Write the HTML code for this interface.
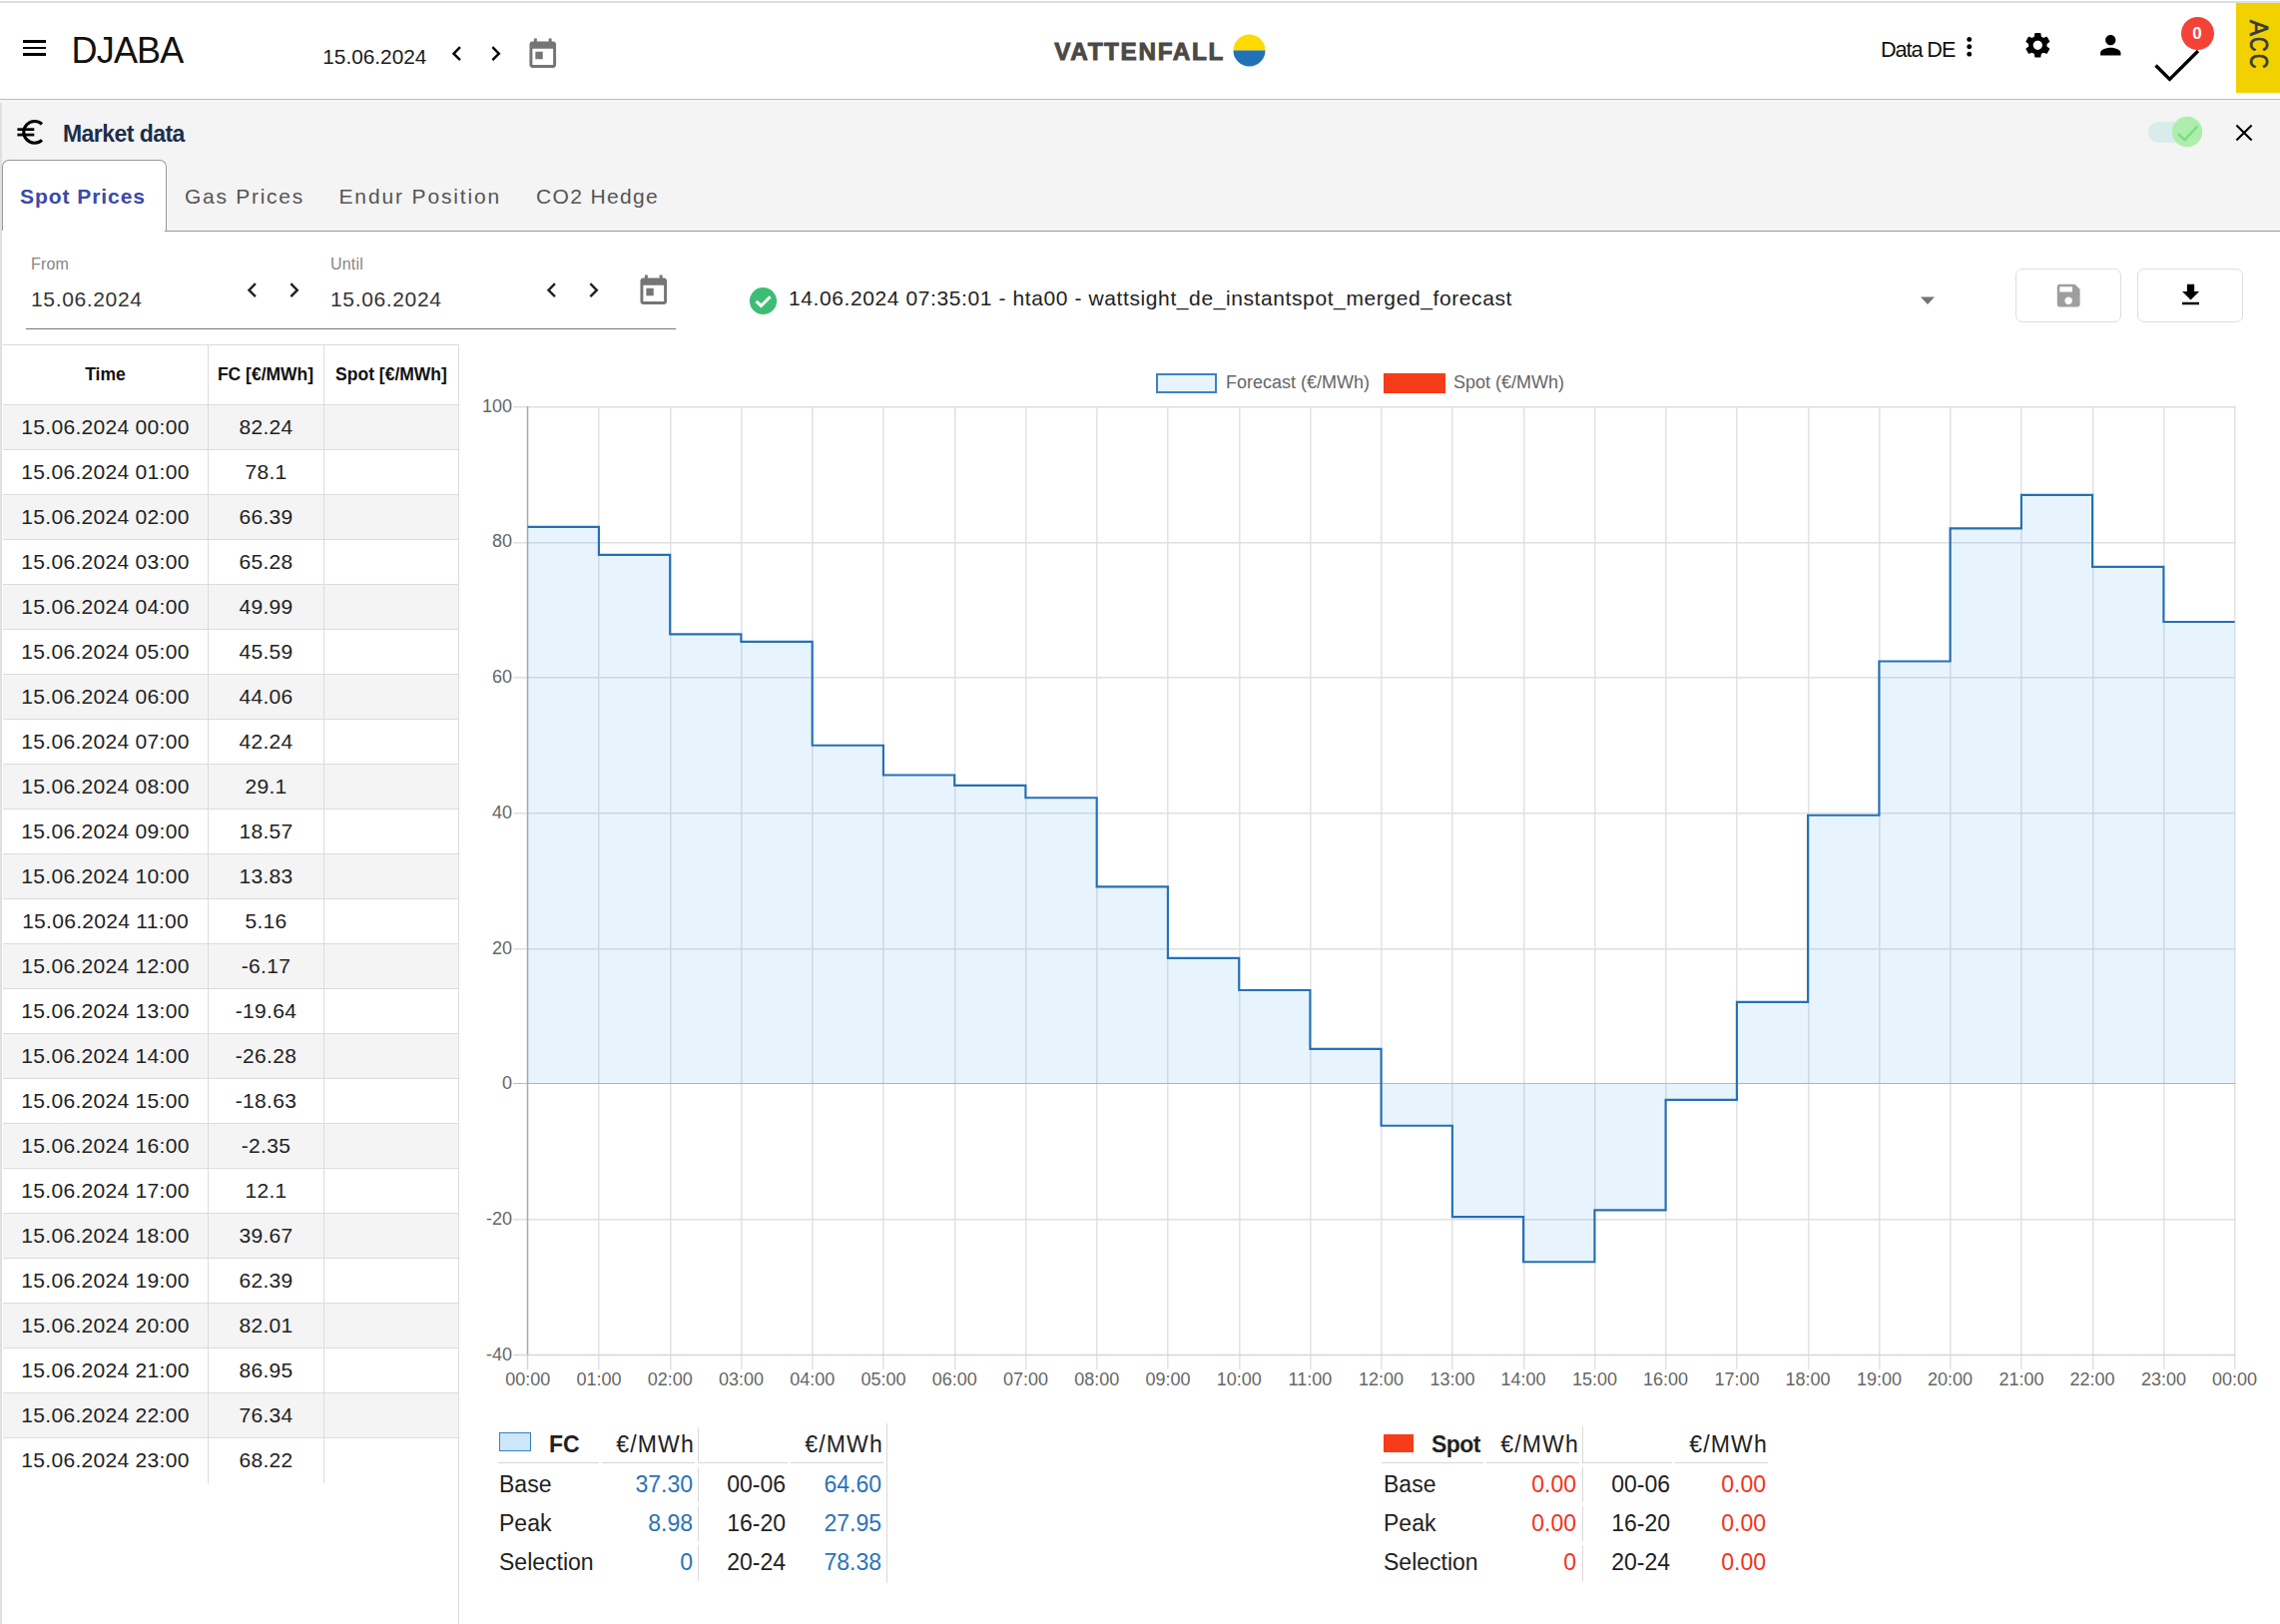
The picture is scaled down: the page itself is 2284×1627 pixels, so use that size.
<!DOCTYPE html>
<html><head><meta charset="utf-8"><title>DJABA</title><style>
html,body{margin:0;padding:0;}
body{width:2284px;height:1627px;position:relative;overflow:hidden;background:#fff;font-family:"Liberation Sans",sans-serif;color:#212121;}
.a{position:absolute;white-space:nowrap;}
/* header */
.topline{position:absolute;left:0;top:1px;width:2284px;height:2px;background:#dcdfdc;}
.hdr-b{position:absolute;left:0;top:99px;width:2284px;height:1px;background:#bdbdbd;}
.ham{position:absolute;left:23.4px;width:23.1px;height:2.4px;background:#000;}
.logo{font-size:36px;left:71.5px;top:30px;color:#111;letter-spacing:-0.8px;}
.hdate{font-size:20.8px;left:323.3px;top:45.3px;letter-spacing:0px;color:#1a1a1a;}
.vf{font-family:"Liberation Sans",sans-serif;font-weight:bold;font-size:24.3px;color:#4c4845;left:1056.2px;top:37.6px;letter-spacing:1.65px;-webkit-text-stroke:0.9px #4c4845;}
.datade{font-size:21.6px;left:1884px;top:37.1px;color:#111;letter-spacing:-1.05px;}
.acc{position:absolute;left:2240px;top:3px;width:44px;height:90px;background:#f2d100;}
.acc span{position:absolute;left:8px;top:66px;transform:rotate(90deg);transform-origin:0 0;}
/* panel */
.panel{position:absolute;left:0;top:100px;width:2284px;height:131px;background:#f4f4f4;}
.pleft{position:absolute;left:0;top:103px;width:2px;height:1524px;background:#e0e0e0;}
.mdata{font-size:23px;font-weight:bold;left:63px;top:120.5px;color:#1c2e4a;letter-spacing:-0.55px;}
.tab{font-size:21px;top:184.5px;color:#555;}
.tabact{position:absolute;left:2px;top:160px;width:165.2px;height:72px;background:#fff;border:1.3px solid #999;border-bottom:none;border-radius:7px 7px 0 0;box-sizing:border-box;height:71px;}
.tabline{position:absolute;left:165px;top:230.7px;width:2119px;height:1.3px;background:#999;}
/* filters */
.lbl{font-size:16px;color:#858585;top:256px;letter-spacing:0.2px;}
.fdate{font-size:21px;color:#333;top:287.7px;letter-spacing:0.65px;}
.uline{position:absolute;left:26px;top:329px;width:651px;height:1px;background:#777;}
.status{font-size:21px;color:#222;left:790px;top:287px;letter-spacing:0.6px;}
.btn{position:absolute;top:269px;width:106.5px;height:53.5px;border:1px solid #dedede;border-radius:7px;background:#fff;box-sizing:border-box;}
/* table */
.tbl{position:absolute;left:3px;top:345px;width:456px;}
.th{position:absolute;top:345px;height:60px;font-weight:bold;font-size:17.5px;color:#111;}
.tr{position:absolute;left:3px;width:457px;height:45px;border-top:1px solid #dcdcdc;box-sizing:border-box;}
.tr.odd{background:#f4f4f4;}
.tr div{position:absolute;top:0;height:44px;line-height:44px;font-size:21px;color:#222;text-align:center;letter-spacing:0.3px;}
.c1{left:0;width:205px;}
.c2{left:206px;width:115px;}
.c3{left:322px;width:135px;}
.vl{position:absolute;width:1px;background:#dcdcdc;}
/* chart */
.chart{position:absolute;left:0;top:0;}
.tk{font-family:"Liberation Sans",sans-serif;font-size:18px;fill:#666;}
.leg{font-size:18px;color:#666;top:372.7px;}
/* summary */
.sum{font-size:23px;color:#222;}
.blue{color:#2a73b9;}
.red{color:#f5331a;}
.hl{position:absolute;height:1.5px;background:#d6d6d6;}
.sv{position:absolute;width:1.5px;background:#dadada;}

</style></head><body>
<div class="topline"></div>
<div class="ham" style="top:40.1px;height:2.8px"></div>
<div class="ham" style="top:46.8px;height:2.3px"></div>
<div class="ham" style="top:53px;height:2.7px"></div>
<div class="a logo" id="logo">DJABA</div>
<div class="a hdate" id="hdate">15.06.2024</div>
<svg class="a" style="left:443.3px;top:39.2px" width="29.3" height="29.3" viewBox="0 0 24 24"><path d="M15.41 7.41L14 6l-6 6 6 6 1.41-1.41L10.83 12z" fill="#000"/></svg>
<svg class="a" style="left:482.2px;top:39.2px" width="29.3" height="29.3" viewBox="0 0 24 24"><path d="M10 6L8.59 7.41 13.17 12l-4.58 4.59L10 18l6-6z" fill="#000"/></svg>
<svg class="a" style="left:526.2px;top:36.8px" width="35.5" height="35.5" viewBox="0 0 24 24"><path d="M19 3h-1V1h-2v2H8V1H6v2H5c-1.11 0-1.99.9-1.99 2L3 19c0 1.1.89 2 2 2h14c1.1 0 2-.9 2-2V5c0-1.1-.9-2-2-2zm0 16H5V8h14v11zM7 10h5v5H7z" fill="#757575"/></svg>
<div class="a vf" id="vf">VATTENFALL</div>
<svg class="a" style="left:1235px;top:34px" width="33" height="33" viewBox="0 0 33 33"><path d="M0.5,16.5 A16,16 0 0 1 32.5,16.5 Z" fill="#ffda00"/><path d="M0.5,16.5 A16,16 0 0 0 32.5,16.5 Z" fill="#2071b5"/></svg>
<div class="a datade" id="datade">Data DE</div>
<svg class="a" style="left:1958.1px;top:32.2px" width="29.5" height="29.5" viewBox="0 0 24 24"><path d="M12 8c1.1 0 2-.9 2-2s-.9-2-2-2-2 .9-2 2 .9 2 2 2zm0 2c-1.1 0-2 .9-2 2s.9 2 2 2 2-.9 2-2-.9-2-2-2zm0 6c-1.1 0-2 .9-2 2s.9 2 2 2 2-.9 2-2-.9-2-2-2z" fill="#000"/></svg>
<svg class="a" style="left:2026.4px;top:29.6px" width="30.7" height="30.7" viewBox="0 0 24 24"><path d="M19.14 12.94c.04-.3.06-.61.06-.94 0-.32-.02-.64-.07-.94l2.03-1.58c.18-.14.23-.41.12-.61l-1.92-3.32c-.12-.22-.37-.29-.59-.22l-2.39.96c-.5-.38-1.03-.7-1.62-.94l-.36-2.54c-.04-.24-.24-.41-.48-.41h-3.84c-.24 0-.43.17-.47.41l-.36 2.54c-.59.24-1.13.57-1.62.94l-2.39-.96c-.22-.08-.47 0-.59.22L2.74 8.87c-.12.21-.08.47.12.61l2.03 1.58c-.05.3-.09.63-.09.94s.02.64.07.94l-2.03 1.58c-.18.14-.23.41-.12.61l1.92 3.32c.12.22.37.29.59.22l2.39-.96c.5.38 1.03.7 1.62.94l.36 2.54c.05.24.24.41.48.41h3.84c.24 0 .44-.17.47-.41l.36-2.54c.59-.24 1.13-.56 1.62-.94l2.39.96c.22.08.47 0 .59-.22l1.92-3.32c.12-.22.07-.47-.12-.61l-2.01-1.58zM12 15.6c-1.98 0-3.6-1.62-3.6-3.6s1.62-3.6 3.6-3.6 3.6 1.62 3.6 3.6-1.62 3.6-3.6 3.6z" fill="#000"/></svg>
<svg class="a" style="left:2098.8px;top:29.6px" width="30.6" height="30.6" viewBox="0 0 24 24"><path d="M12 12c2.21 0 4-1.79 4-4s-1.79-4-4-4-4 1.79-4 4 1.79 4 4 4zm0 2c-2.67 0-8 1.34-8 4v2h16v-2c0-2.66-5.33-4-8-4z" fill="#000"/></svg>
<svg class="a" style="left:2150px;top:40px" width="60" height="45" viewBox="0 0 60 45"><path d="M9.5,25.5 L23.5,39.5 L52,11" fill="none" stroke="#000" stroke-width="3.3"/></svg>
<div class="a" style="left:2184.5px;top:16.5px;width:33px;height:33px;border-radius:50%;background:#f44336;"></div>
<div class="a" id="badge" style="left:2184.5px;top:16.5px;width:33px;height:33px;line-height:33px;text-align:center;color:#fff;font-weight:bold;font-size:17px;">0</div>
<div class="acc"></div><div class="a" style="left:2277.6px;top:20.0px;font-size:26px;line-height:30px;color:#3a3a3a;-webkit-text-stroke:0.7px #3a3a3a;transform:rotate(90deg) scale(0.92,1);transform-origin:0 0;">A</div><div class="a" style="left:2277.6px;top:37.3px;font-size:26px;line-height:30px;color:#3a3a3a;-webkit-text-stroke:0.7px #3a3a3a;transform:rotate(90deg) scale(0.78,1);transform-origin:0 0;">C</div><div class="a" style="left:2277.6px;top:54.2px;font-size:26px;line-height:30px;color:#3a3a3a;-webkit-text-stroke:0.7px #3a3a3a;transform:rotate(90deg) scale(0.78,1);transform-origin:0 0;">C</div>
<div class="hdr-b"></div>

<div class="panel"></div>
<svg class="a" style="left:0px;top:100px" width="60" height="60" viewBox="0 100 60 60"><path d="M42,124.4 A10.85,10.85 0 1 0 42,140.3" fill="none" stroke="#000" stroke-width="3.1"/><rect x="17.4" y="128.3" width="16.9" height="2.7" fill="#000"/><rect x="17.4" y="133.7" width="16.9" height="2.7" fill="#000"/></svg>
<div class="a mdata" id="mdata">Market data</div>
<svg class="a" style="left:2140px;top:110px" width="70" height="44" viewBox="0 0 70 44"><rect x="12" y="12" width="41" height="21" rx="10.5" fill="#d9ecec"/><circle cx="51" cy="22" r="15.2" fill="#aeeeac"/><path d="M42,24 L48.4,30.1 L61.3,16.6" fill="none" stroke="#7ddf80" stroke-width="2.6"/></svg>
<svg class="a" style="left:2236px;top:121px" width="24" height="24" viewBox="0 0 24 24"><path d="M4.4,4.4 L19.6,19.6 M19.6,4.4 L4.4,19.6" stroke="#000" stroke-width="2.1" fill="none"/></svg>
<div class="tabline"></div>
<div class="tabact"></div>
<div class="a tab" id="tab1" style="left:20px;color:#3949ab;font-weight:bold;letter-spacing:0.95px;">Spot Prices</div>
<div class="a tab" id="tab2" style="left:185px;letter-spacing:1.72px;">Gas Prices</div>
<div class="a tab" id="tab3" style="left:339.5px;letter-spacing:1.86px;">Endur Position</div>
<div class="a tab" id="tab4" style="left:537px;letter-spacing:1.35px;">CO2 Hedge</div>
<div class="pleft"></div>

<div class="a lbl" id="lblfrom" style="left:31px;">From</div>
<div class="a fdate" id="fd1" style="left:31px;">15.06.2024</div>
<svg class="a" style="left:238px;top:276.3px" width="29.3" height="29.3" viewBox="0 0 24 24"><path d="M15.41 7.41L14 6l-6 6 6 6 1.41-1.41L10.83 12z" fill="#222"/></svg>
<svg class="a" style="left:280px;top:276.3px" width="29.3" height="29.3" viewBox="0 0 24 24"><path d="M10 6L8.59 7.41 13.17 12l-4.58 4.59L10 18l6-6z" fill="#222"/></svg>
<div class="a lbl" id="lbluntil" style="left:331px;">Until</div>
<div class="a fdate" id="fd2" style="left:331px;">15.06.2024</div>
<svg class="a" style="left:538px;top:276.3px" width="29.3" height="29.3" viewBox="0 0 24 24"><path d="M15.41 7.41L14 6l-6 6 6 6 1.41-1.41L10.83 12z" fill="#222"/></svg>
<svg class="a" style="left:580px;top:276.3px" width="29.3" height="29.3" viewBox="0 0 24 24"><path d="M10 6L8.59 7.41 13.17 12l-4.58 4.59L10 18l6-6z" fill="#222"/></svg>
<svg class="a" style="left:636.5px;top:273.5px" width="35.5" height="35.5" viewBox="0 0 24 24"><path d="M19 3h-1V1h-2v2H8V1H6v2H5c-1.11 0-1.99.9-1.99 2L3 19c0 1.1.89 2 2 2h14c1.1 0 2-.9 2-2V5c0-1.1-.9-2-2-2zm0 16H5V8h14v11zM7 10h5v5H7z" fill="#757575"/></svg>
<div class="uline"></div>

<svg class="a" style="left:749px;top:286px" width="31" height="31" viewBox="0 0 31 31"><circle cx="15.5" cy="15.5" r="13.6" fill="#3dbd73"/><path d="M8.6,15.8 L13.4,20.4 L22.6,11.2" fill="none" stroke="#fff" stroke-width="3"/></svg>
<div class="a status" id="status">14.06.2024 07:35:01 - hta00 - wattsight_de_instantspot_merged_forecast</div>
<svg class="a" style="left:1921px;top:294px" width="20" height="14" viewBox="0 0 20 14"><path d="M2.9,3.5 L17,3.5 L10,11 Z" fill="#757575"/></svg>
<div class="btn" style="left:2018.7px;"></div>
<svg class="a" style="left:2057.2px;top:281px" width="30.4" height="30.4" viewBox="0 0 24 24"><path d="M17 3H5c-1.11 0-2 .9-2 2v14c0 1.1.89 2 2 2h14c1.1 0 2-.9 2-2V7l-4-4zm-5 16c-1.66 0-3-1.34-3-3s1.34-3 3-3 3 1.34 3 3-1.34 3-3 3zm3-10H5V5h10v4z" fill="#9e9e9e"/></svg>
<div class="btn" style="left:2140.7px;"></div>
<svg class="a" style="left:2179.9px;top:281.2px" width="29.1" height="29.1" viewBox="0 0 24 24"><path d="M19 9h-4V3H9v6H5l7 7 7-7zM5 18v2h14v-2H5z" fill="#000"/></svg>

<!-- table -->
<div class="a" style="left:3px;top:345px;width:457px;height:1px;background:#dcdcdc;"></div>
<div class="a th" id="th1" style="left:3px;width:205px;line-height:60px;text-align:center;">Time</div>
<div class="a th" id="th2" style="left:208px;width:116px;line-height:60px;text-align:center;">FC [€/MWh]</div>
<div class="a th" id="th3" style="left:325px;width:134px;line-height:60px;text-align:center;">Spot [€/MWh]</div>
<div class="tr odd" style="top:405px"><div class="c1">15.06.2024 00:00</div><div class="c2">82.24</div><div class="c3"></div></div>
<div class="tr" style="top:450px"><div class="c1">15.06.2024 01:00</div><div class="c2">78.1</div><div class="c3"></div></div>
<div class="tr odd" style="top:495px"><div class="c1">15.06.2024 02:00</div><div class="c2">66.39</div><div class="c3"></div></div>
<div class="tr" style="top:540px"><div class="c1">15.06.2024 03:00</div><div class="c2">65.28</div><div class="c3"></div></div>
<div class="tr odd" style="top:585px"><div class="c1">15.06.2024 04:00</div><div class="c2">49.99</div><div class="c3"></div></div>
<div class="tr" style="top:630px"><div class="c1">15.06.2024 05:00</div><div class="c2">45.59</div><div class="c3"></div></div>
<div class="tr odd" style="top:675px"><div class="c1">15.06.2024 06:00</div><div class="c2">44.06</div><div class="c3"></div></div>
<div class="tr" style="top:720px"><div class="c1">15.06.2024 07:00</div><div class="c2">42.24</div><div class="c3"></div></div>
<div class="tr odd" style="top:765px"><div class="c1">15.06.2024 08:00</div><div class="c2">29.1</div><div class="c3"></div></div>
<div class="tr" style="top:810px"><div class="c1">15.06.2024 09:00</div><div class="c2">18.57</div><div class="c3"></div></div>
<div class="tr odd" style="top:855px"><div class="c1">15.06.2024 10:00</div><div class="c2">13.83</div><div class="c3"></div></div>
<div class="tr" style="top:900px"><div class="c1">15.06.2024 11:00</div><div class="c2">5.16</div><div class="c3"></div></div>
<div class="tr odd" style="top:945px"><div class="c1">15.06.2024 12:00</div><div class="c2">-6.17</div><div class="c3"></div></div>
<div class="tr" style="top:990px"><div class="c1">15.06.2024 13:00</div><div class="c2">-19.64</div><div class="c3"></div></div>
<div class="tr odd" style="top:1035px"><div class="c1">15.06.2024 14:00</div><div class="c2">-26.28</div><div class="c3"></div></div>
<div class="tr" style="top:1080px"><div class="c1">15.06.2024 15:00</div><div class="c2">-18.63</div><div class="c3"></div></div>
<div class="tr odd" style="top:1125px"><div class="c1">15.06.2024 16:00</div><div class="c2">-2.35</div><div class="c3"></div></div>
<div class="tr" style="top:1170px"><div class="c1">15.06.2024 17:00</div><div class="c2">12.1</div><div class="c3"></div></div>
<div class="tr odd" style="top:1215px"><div class="c1">15.06.2024 18:00</div><div class="c2">39.67</div><div class="c3"></div></div>
<div class="tr" style="top:1260px"><div class="c1">15.06.2024 19:00</div><div class="c2">62.39</div><div class="c3"></div></div>
<div class="tr odd" style="top:1305px"><div class="c1">15.06.2024 20:00</div><div class="c2">82.01</div><div class="c3"></div></div>
<div class="tr" style="top:1350px"><div class="c1">15.06.2024 21:00</div><div class="c2">86.95</div><div class="c3"></div></div>
<div class="tr odd" style="top:1395px"><div class="c1">15.06.2024 22:00</div><div class="c2">76.34</div><div class="c3"></div></div>
<div class="tr" style="top:1440px"><div class="c1">15.06.2024 23:00</div><div class="c2">68.22</div><div class="c3"></div></div>
<div class="vl" style="left:208px;top:345px;height:1141px;"></div>
<div class="vl" style="left:324px;top:345px;height:1141px;"></div>
<div class="vl" style="left:459px;top:345px;height:1282px;"></div>

<svg class="chart" width="2284" height="1627" viewBox="0 0 2284 1627">
<line x1="599.80" y1="407.5" x2="599.80" y2="1372.0" stroke="#e0e0e0" stroke-width="1.4"/>
<line x1="671.80" y1="407.5" x2="671.80" y2="1372.0" stroke="#e0e0e0" stroke-width="1.4"/>
<line x1="742.80" y1="407.5" x2="742.80" y2="1372.0" stroke="#e0e0e0" stroke-width="1.4"/>
<line x1="813.80" y1="407.5" x2="813.80" y2="1372.0" stroke="#e0e0e0" stroke-width="1.4"/>
<line x1="884.80" y1="407.5" x2="884.80" y2="1372.0" stroke="#e0e0e0" stroke-width="1.4"/>
<line x1="956.80" y1="407.5" x2="956.80" y2="1372.0" stroke="#e0e0e0" stroke-width="1.4"/>
<line x1="1027.80" y1="407.5" x2="1027.80" y2="1372.0" stroke="#e0e0e0" stroke-width="1.4"/>
<line x1="1098.80" y1="407.5" x2="1098.80" y2="1372.0" stroke="#e0e0e0" stroke-width="1.4"/>
<line x1="1169.80" y1="407.5" x2="1169.80" y2="1372.0" stroke="#e0e0e0" stroke-width="1.4"/>
<line x1="1241.80" y1="407.5" x2="1241.80" y2="1372.0" stroke="#e0e0e0" stroke-width="1.4"/>
<line x1="1312.80" y1="407.5" x2="1312.80" y2="1372.0" stroke="#e0e0e0" stroke-width="1.4"/>
<line x1="1383.80" y1="407.5" x2="1383.80" y2="1372.0" stroke="#e0e0e0" stroke-width="1.4"/>
<line x1="1454.80" y1="407.5" x2="1454.80" y2="1372.0" stroke="#e0e0e0" stroke-width="1.4"/>
<line x1="1526.80" y1="407.5" x2="1526.80" y2="1372.0" stroke="#e0e0e0" stroke-width="1.4"/>
<line x1="1597.80" y1="407.5" x2="1597.80" y2="1372.0" stroke="#e0e0e0" stroke-width="1.4"/>
<line x1="1668.80" y1="407.5" x2="1668.80" y2="1372.0" stroke="#e0e0e0" stroke-width="1.4"/>
<line x1="1739.80" y1="407.5" x2="1739.80" y2="1372.0" stroke="#e0e0e0" stroke-width="1.4"/>
<line x1="1811.80" y1="407.5" x2="1811.80" y2="1372.0" stroke="#e0e0e0" stroke-width="1.4"/>
<line x1="1882.80" y1="407.5" x2="1882.80" y2="1372.0" stroke="#e0e0e0" stroke-width="1.4"/>
<line x1="1953.80" y1="407.5" x2="1953.80" y2="1372.0" stroke="#e0e0e0" stroke-width="1.4"/>
<line x1="2024.80" y1="407.5" x2="2024.80" y2="1372.0" stroke="#e0e0e0" stroke-width="1.4"/>
<line x1="2096.80" y1="407.5" x2="2096.80" y2="1372.0" stroke="#e0e0e0" stroke-width="1.4"/>
<line x1="2167.80" y1="407.5" x2="2167.80" y2="1372.0" stroke="#e0e0e0" stroke-width="1.4"/>
<line x1="2238.80" y1="407.5" x2="2238.80" y2="1372.0" stroke="#e0e0e0" stroke-width="1.4"/>
<line x1="514" y1="1357.50" x2="2239.5" y2="1357.50" stroke="#d6d6d6" stroke-width="1.5"/>
<line x1="514" y1="1221.80" x2="2239.5" y2="1221.80" stroke="#e0e0e0" stroke-width="1.4"/>
<line x1="514" y1="1085.50" x2="2239.5" y2="1085.50" stroke="#bcbcbc" stroke-width="1.1"/>
<line x1="514" y1="950.80" x2="2239.5" y2="950.80" stroke="#e0e0e0" stroke-width="1.4"/>
<line x1="514" y1="814.80" x2="2239.5" y2="814.80" stroke="#e0e0e0" stroke-width="1.4"/>
<line x1="514" y1="678.80" x2="2239.5" y2="678.80" stroke="#e0e0e0" stroke-width="1.4"/>
<line x1="514" y1="543.80" x2="2239.5" y2="543.80" stroke="#e0e0e0" stroke-width="1.4"/>
<line x1="514" y1="407.80" x2="2239.5" y2="407.80" stroke="#e0e0e0" stroke-width="1.4"/>
<line x1="528.5" y1="407.0" x2="528.5" y2="1357.5" stroke="#a9a9a9" stroke-width="1.5"/>
<line x1="528.5" y1="1357.5" x2="528.5" y2="1372.0" stroke="#d4d4d4" stroke-width="1.5"/>
<path d="M528.7,1085.9 L528.7,527.8 L599.9,527.8 L599.9,555.9 L671.2,555.9 L671.2,635.4 L742.4,635.4 L742.4,642.9 L813.7,642.9 L813.7,746.7 L884.9,746.7 L884.9,776.5 L956.2,776.5 L956.2,786.9 L1027.4,786.9 L1027.4,799.2 L1098.7,799.2 L1098.7,888.4 L1169.9,888.4 L1169.9,959.9 L1241.2,959.9 L1241.2,992.0 L1312.4,992.0 L1312.4,1050.9 L1383.6,1050.9 L1383.6,1127.7 L1454.9,1127.7 L1454.9,1219.1 L1526.1,1219.1 L1526.1,1264.2 L1597.4,1264.2 L1597.4,1212.3 L1668.6,1212.3 L1668.6,1101.8 L1739.9,1101.8 L1739.9,1003.8 L1811.1,1003.8 L1811.1,816.7 L1882.4,816.7 L1882.4,662.5 L1953.6,662.5 L1953.6,529.4 L2024.9,529.4 L2024.9,495.9 L2096.1,495.9 L2096.1,567.9 L2167.4,567.9 L2167.4,623.0 L2238.6,623.0 L2238.6,1085.9 Z" fill="rgba(25,145,235,0.1)" stroke="none"/>
<path d="M528.7,527.8 L599.9,527.8 L599.9,555.9 L671.2,555.9 L671.2,635.4 L742.4,635.4 L742.4,642.9 L813.7,642.9 L813.7,746.7 L884.9,746.7 L884.9,776.5 L956.2,776.5 L956.2,786.9 L1027.4,786.9 L1027.4,799.2 L1098.7,799.2 L1098.7,888.4 L1169.9,888.4 L1169.9,959.9 L1241.2,959.9 L1241.2,992.0 L1312.4,992.0 L1312.4,1050.9 L1383.6,1050.9 L1383.6,1127.7 L1454.9,1127.7 L1454.9,1219.1 L1526.1,1219.1 L1526.1,1264.2 L1597.4,1264.2 L1597.4,1212.3 L1668.6,1212.3 L1668.6,1101.8 L1739.9,1101.8 L1739.9,1003.8 L1811.1,1003.8 L1811.1,816.7 L1882.4,816.7 L1882.4,662.5 L1953.6,662.5 L1953.6,529.4 L2024.9,529.4 L2024.9,495.9 L2096.1,495.9 L2096.1,567.9 L2167.4,567.9 L2167.4,623.0 L2238.6,623.0" fill="none" stroke="#2470b6" stroke-width="2.15" stroke-linejoin="miter"/>
<text x="513" y="1362.6" text-anchor="end" class="tk">-40</text>
<text x="513" y="1226.9" text-anchor="end" class="tk">-20</text>
<text x="513" y="1091.2" text-anchor="end" class="tk">0</text>
<text x="513" y="955.5" text-anchor="end" class="tk">20</text>
<text x="513" y="819.7" text-anchor="end" class="tk">40</text>
<text x="513" y="684.0" text-anchor="end" class="tk">60</text>
<text x="513" y="548.3" text-anchor="end" class="tk">80</text>
<text x="513" y="412.6" text-anchor="end" class="tk">100</text>
<text x="528.7" y="1388" text-anchor="middle" class="tk">00:00</text>
<text x="599.9" y="1388" text-anchor="middle" class="tk">01:00</text>
<text x="671.2" y="1388" text-anchor="middle" class="tk">02:00</text>
<text x="742.4" y="1388" text-anchor="middle" class="tk">03:00</text>
<text x="813.7" y="1388" text-anchor="middle" class="tk">04:00</text>
<text x="884.9" y="1388" text-anchor="middle" class="tk">05:00</text>
<text x="956.2" y="1388" text-anchor="middle" class="tk">06:00</text>
<text x="1027.4" y="1388" text-anchor="middle" class="tk">07:00</text>
<text x="1098.7" y="1388" text-anchor="middle" class="tk">08:00</text>
<text x="1169.9" y="1388" text-anchor="middle" class="tk">09:00</text>
<text x="1241.2" y="1388" text-anchor="middle" class="tk">10:00</text>
<text x="1312.4" y="1388" text-anchor="middle" class="tk">11:00</text>
<text x="1383.6" y="1388" text-anchor="middle" class="tk">12:00</text>
<text x="1454.9" y="1388" text-anchor="middle" class="tk">13:00</text>
<text x="1526.1" y="1388" text-anchor="middle" class="tk">14:00</text>
<text x="1597.4" y="1388" text-anchor="middle" class="tk">15:00</text>
<text x="1668.6" y="1388" text-anchor="middle" class="tk">16:00</text>
<text x="1739.9" y="1388" text-anchor="middle" class="tk">17:00</text>
<text x="1811.1" y="1388" text-anchor="middle" class="tk">18:00</text>
<text x="1882.4" y="1388" text-anchor="middle" class="tk">19:00</text>
<text x="1953.6" y="1388" text-anchor="middle" class="tk">20:00</text>
<text x="2024.9" y="1388" text-anchor="middle" class="tk">21:00</text>
<text x="2096.1" y="1388" text-anchor="middle" class="tk">22:00</text>
<text x="2167.4" y="1388" text-anchor="middle" class="tk">23:00</text>
<text x="2238.6" y="1388" text-anchor="middle" class="tk">00:00</text>
</svg>
<div class="a" style="left:1158.3px;top:374px;width:57.2px;height:16px;border:2px solid #3b82c4;background:#e8f4fd;"></div>
<div class="a leg" id="leg1" style="left:1228px;">Forecast (€/MWh)</div>
<div class="a" style="left:1386px;top:374px;width:62px;height:20px;background:#f63c18;"></div>
<div class="a leg" id="leg2" style="left:1456px;">Spot (€/MWh)</div>

<!-- summary FC -->
<div class="a" style="left:500px;top:1435px;width:29.5px;height:17.2px;border:1.5px solid #3a7fc2;background:#cce6fb;"></div>
<div class="a sum" id="s_fc" style="left:550px;top:1434px;font-weight:bold;">FC</div>
<div class="a sum" style="left:596px;top:1434px;width:98px;text-align:right;letter-spacing:1.2px;padding-left:2px;">€/MWh</div>
<div class="a sum" style="left:786px;top:1434px;width:97px;text-align:right;letter-spacing:1.2px;padding-left:2px;">€/MWh</div>
<div class="hl" style="left:499px;top:1464.5px;width:101px;"></div>
<div class="hl" style="left:603px;top:1464.5px;width:93px;"></div>
<div class="hl" style="left:700px;top:1464.5px;width:89px;"></div>
<div class="hl" style="left:792px;top:1464.5px;width:93px;"></div>
<div class="sv" style="left:698.5px;top:1429.5px;height:36px;"></div>
<div class="sv" style="left:698.5px;top:1469.5px;height:35px;"></div>
<div class="sv" style="left:698.5px;top:1508.5px;height:35px;"></div>
<div class="sv" style="left:698.5px;top:1547.5px;height:36px;"></div>
<div class="sv" style="left:887.5px;top:1426px;height:160px;"></div>
<div class="a sum" id="s_base" style="left:500px;top:1474px;">Base</div>
<div class="a sum" style="left:500px;top:1513px;">Peak</div>
<div class="a sum" style="left:500px;top:1552px;">Selection</div>
<div class="a sum blue" style="left:596px;top:1474px;width:98px;text-align:right;">37.30</div>
<div class="a sum blue" style="left:596px;top:1513px;width:98px;text-align:right;">8.98</div>
<div class="a sum blue" style="left:596px;top:1552px;width:98px;text-align:right;">0</div>
<div class="a sum" style="left:700px;top:1474px;width:87px;text-align:right;">00-06</div>
<div class="a sum" style="left:700px;top:1513px;width:87px;text-align:right;">16-20</div>
<div class="a sum" style="left:700px;top:1552px;width:87px;text-align:right;">20-24</div>
<div class="a sum blue" style="left:786px;top:1474px;width:97px;text-align:right;">64.60</div>
<div class="a sum blue" style="left:786px;top:1513px;width:97px;text-align:right;">27.95</div>
<div class="a sum blue" style="left:786px;top:1552px;width:97px;text-align:right;">78.38</div>

<!-- summary Spot -->
<div class="a" style="left:1386px;top:1437px;width:30px;height:18px;background:#f63c18;"></div>
<div class="a sum" id="s_spot" style="left:1434px;top:1434px;font-weight:bold;letter-spacing:-0.6px;">Spot</div>
<div class="a sum" style="left:1480px;top:1434px;width:100px;text-align:right;letter-spacing:1.2px;padding-left:2px;">€/MWh</div>
<div class="a sum" style="left:1670px;top:1434px;width:99px;text-align:right;letter-spacing:1.2px;padding-left:2px;">€/MWh</div>
<div class="hl" style="left:1384px;top:1464.5px;width:102px;"></div>
<div class="hl" style="left:1489px;top:1464.5px;width:93px;"></div>
<div class="hl" style="left:1585px;top:1464.5px;width:90px;"></div>
<div class="hl" style="left:1678px;top:1464.5px;width:93px;"></div>
<div class="sv" style="left:1584.5px;top:1429px;height:36px;"></div>
<div class="sv" style="left:1584.5px;top:1469.5px;height:35px;"></div>
<div class="sv" style="left:1584.5px;top:1508.5px;height:35px;"></div>
<div class="sv" style="left:1584.5px;top:1547.5px;height:36px;"></div>
<div class="a sum" style="left:1386px;top:1474px;">Base</div>
<div class="a sum" style="left:1386px;top:1513px;">Peak</div>
<div class="a sum" style="left:1386px;top:1552px;">Selection</div>
<div class="a sum red" style="left:1480px;top:1474px;width:99px;text-align:right;">0.00</div>
<div class="a sum red" style="left:1480px;top:1513px;width:99px;text-align:right;">0.00</div>
<div class="a sum red" style="left:1480px;top:1552px;width:99px;text-align:right;">0</div>
<div class="a sum" style="left:1586px;top:1474px;width:87px;text-align:right;">00-06</div>
<div class="a sum" style="left:1586px;top:1513px;width:87px;text-align:right;">16-20</div>
<div class="a sum" style="left:1586px;top:1552px;width:87px;text-align:right;">20-24</div>
<div class="a sum red" style="left:1670px;top:1474px;width:99px;text-align:right;">0.00</div>
<div class="a sum red" style="left:1670px;top:1513px;width:99px;text-align:right;">0.00</div>
<div class="a sum red" style="left:1670px;top:1552px;width:99px;text-align:right;">0.00</div>

</body></html>
